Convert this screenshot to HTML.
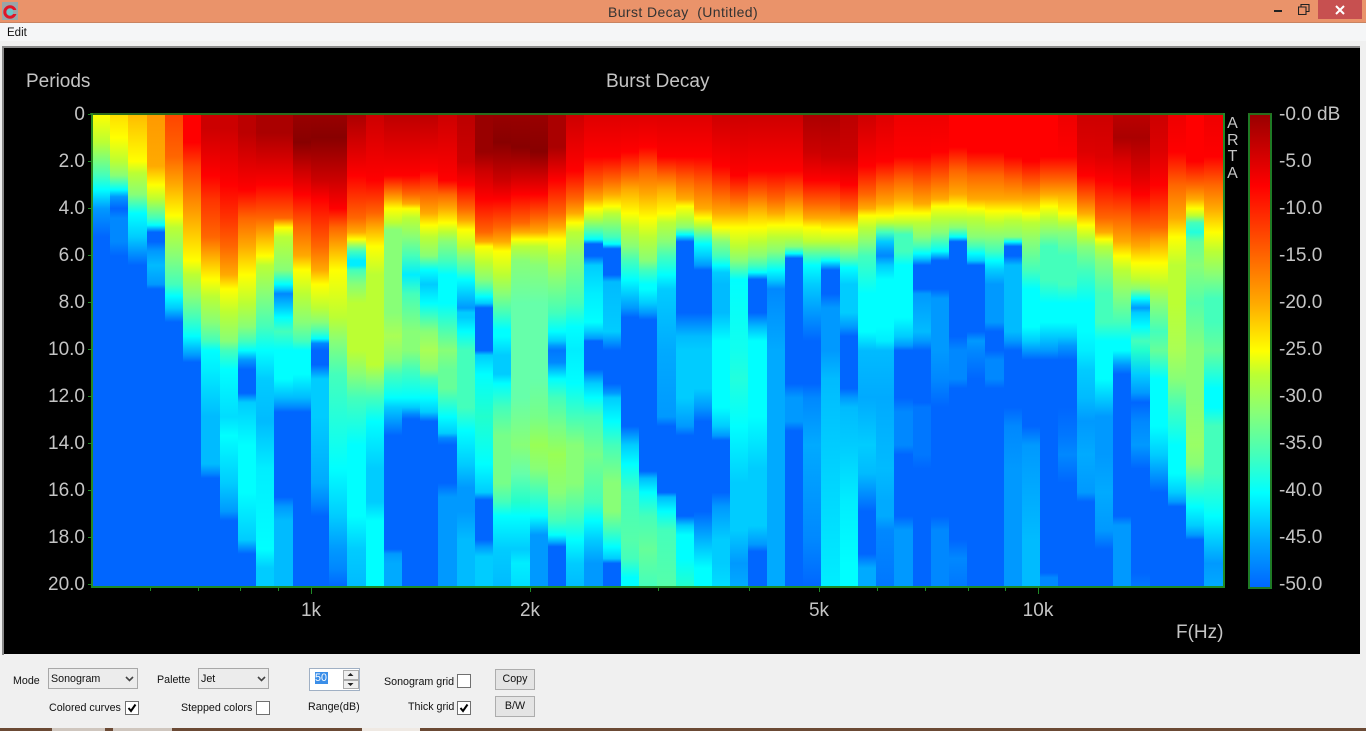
<!DOCTYPE html>
<html><head><meta charset="utf-8"><title>Burst Decay</title>
<style>
html,body{margin:0;padding:0;width:1366px;height:731px;overflow:hidden;background:#f0f0f0;font-family:"Liberation Sans",sans-serif}
div,span,b{position:absolute;white-space:pre}
#map{left:92px;top:114px;width:1131px;height:473px;display:flex}
#map i{display:block;flex:1 1 0;height:100%}
.l{color:#c4c4c4;font-size:19px;line-height:20px}
.yl{right:1281px;text-align:right}
.dl{left:1279px}
.xl{transform:translateX(-50%)}
.t{background:#1f8a25}
.c{font-size:10.7px;line-height:14px;color:#111}
.cb{width:12px;height:12px;border:1px solid #707070;background:#fff}
.sel{border:1px solid #a8a8a8;background:#ececec;height:19px}
.btn{border:1px solid #adadad;background:#e4e4e4;width:38px;height:19px;text-align:center;font-size:10.7px;line-height:19px;color:#111}
</style></head><body>
<div style="left:0;top:0;width:1366px;height:22px;background:#ea936a"></div>
<div style="left:0;top:22px;width:1366px;height:1px;background:#c98461"></div>
<svg style="position:absolute;left:2px;top:2px" width="16" height="18" viewBox="0 0 16 18"><rect x="0" y="0" width="16" height="18" fill="#9aa6a8"/><circle cx="8" cy="10" r="5.2" fill="#6cc6cc" stroke="#e01528" stroke-width="3"/><rect x="11" y="8" width="5" height="4" fill="#9aa6a8"/></svg>
<div style="left:608px;top:4px;font-size:14px;line-height:16px;color:#333;letter-spacing:.4px">Burst Decay  (Untitled)</div>
<div style="left:1274px;top:10px;width:8px;height:2px;background:#222"></div>
<svg style="position:absolute;left:1298px;top:4px" width="12" height="11" viewBox="0 0 12 11"><path d="M3 2.5V.5H11V7.5H8.5M.5 3H8V10.5H.5Z" fill="none" stroke="#222" stroke-width="1.1"/></svg>
<div style="left:1318px;top:0;width:44px;height:19px;background:#c75050"></div>
<svg style="position:absolute;left:1335px;top:5px" width="10" height="10" viewBox="0 0 10 10"><path d="M1 1L9 9M9 1L1 9" stroke="#fff" stroke-width="2"/></svg>

<div style="left:0;top:23px;width:1366px;height:18px;background:#f5f6f7"></div>
<div class="c" style="left:7px;top:26px;color:#111;font-size:11.5px">Edit</div>

<div style="left:3px;top:46px;width:1357px;height:608px;background:#000"></div>
<div style="left:3px;top:46px;width:1357px;height:2px;background:#8a8a8a"></div>
<div style="left:2px;top:46px;width:2px;height:609px;background:#8a8a8a"></div>

<div class="l" style="left:26px;top:72px">Periods</div>
<div class="l" style="left:606px;top:72px">Burst Decay</div>

<div class="l yl" style="top:105px">0</div>
<div class="l yl" style="top:152px">2.0</div>
<div class="l yl" style="top:199px">4.0</div>
<div class="l yl" style="top:246px">6.0</div>
<div class="l yl" style="top:293px">8.0</div>
<div class="l yl" style="top:340px">10.0</div>
<div class="l yl" style="top:387px">12.0</div>
<div class="l yl" style="top:434px">14.0</div>
<div class="l yl" style="top:481px">16.0</div>
<div class="l yl" style="top:528px">18.0</div>
<div class="l yl" style="top:575px">20.0</div>

<div class="t" style="left:88px;top:114px;width:4px;height:1px"></div>
<div class="t" style="left:88px;top:161px;width:4px;height:1px"></div>
<div class="t" style="left:88px;top:208px;width:4px;height:1px"></div>
<div class="t" style="left:88px;top:255px;width:4px;height:1px"></div>
<div class="t" style="left:88px;top:302px;width:4px;height:1px"></div>
<div class="t" style="left:88px;top:349px;width:4px;height:1px"></div>
<div class="t" style="left:88px;top:396px;width:4px;height:1px"></div>
<div class="t" style="left:88px;top:443px;width:4px;height:1px"></div>
<div class="t" style="left:88px;top:490px;width:4px;height:1px"></div>
<div class="t" style="left:88px;top:537px;width:4px;height:1px"></div>
<div class="t" style="left:88px;top:584px;width:4px;height:1px"></div>

<div id="map">
<i style="background:linear-gradient(#ff0 0,#bf3 6%,#4fb 13%,#0ff 16%,#09f 20%,#06f 26%)"></i>
<i style="background:linear-gradient(#fd0 0,#ff0 5%,#bf3 10%,#8f7 13%,#0ff 16%,#09f 17.5%,#06f 20%,#08f 22%,#08f 27%,#06f 30%)"></i>
<i style="background:linear-gradient(#fb0 0,#ff0 10%,#bf3 12.5%,#8f7 17%,#0ff 21%,#0cf 26%,#09f 29%,#06f 32%)"></i>
<i style="background:linear-gradient(#f90 0,#fa0 11%,#ff0 15%,#bf3 18%,#4fb 22%,#0ff 23.5%,#06f 25%,#06f 27%,#09f 29%,#0bf 32%,#09f 36%,#06f 37%)"></i>
<i style="background:linear-gradient(#f40 0,#f60 9%,#fa0 15%,#ff0 21.5%,#bf3 24%,#8f7 30%,#4fb 36%,#0ff 38.5%,#0cf 41%,#09f 42.5%,#06f 44%)"></i>
<i style="background:linear-gradient(#f00 0,#f00 6%,#f40 11%,#fa0 22%,#ff0 31%,#bf3 34%,#8f7 38.5%,#4fb 43%,#0ff 47%,#0cf 49%,#09f 51%,#06f 52.5%)"></i>
<i style="background:linear-gradient(#c00 3%,#f00 13%,#f30 18%,#f60 26%,#fa0 30%,#ff0 35%,#bf3 38.6%,#8f7 44%,#4fb 48%,#0ff 50%,#0ef 54%,#0bf 64%,#0bf 74%,#08f 76%,#06f 77%)"></i>
<i style="background:linear-gradient(#c00 3%,#f00 15%,#f30 22%,#f60 28%,#fa0 34%,#ff0 37%,#bf3 42%,#8f7 48%,#4fb 50%,#0ff 54%,#0df 64%,#0ff 68%,#0cf 78%,#09f 84%,#06f 86%)"></i>
<i style="background:linear-gradient(#b00 4%,#f00 16%,#f60 22%,#fa0 28%,#ff0 34%,#bf3 40%,#8f7 45%,#4fb 48%,#0ff 50%,#09f 52%,#06f 54%,#06f 59%,#0cf 61%,#0ff 70%,#0ff 80%,#0cf 90%,#08f 92%,#06f 93%)"></i>
<i style="background:linear-gradient(#a00 4%,#f00 15%,#f60 22%,#ff0 30%,#bf3 32%,#8f7 38%,#4fb 45%,#0ff 50%,#0cf 56%,#0bf 65%,#0ef 75%,#0ff 92%,#0cf 96%,#0cf 100%)"></i>
<i style="background:linear-gradient(#a00 4%,#f00 15%,#f60 22%,#ff0 24%,#bf3 26%,#8f7 33%,#0ff 36%,#0cf 37%,#08f 38%,#0cf 41%,#0ff 43%,#4fb 46%,#0ff 50%,#0ff 56%,#0bf 60%,#08f 62%,#06f 63%,#06f 81%,#09f 83%,#0bf 86%,#0bf 100%)"></i>
<i style="background:linear-gradient(#900 0,#800 6%,#c00 12%,#f00 17%,#f60 24%,#fa0 30%,#ff0 33%,#bf3 38%,#8f7 44%,#4fb 48%,#0ff 50%,#0ff 55%,#0bf 60%,#08f 62%,#06f 63%)"></i>
<i style="background:linear-gradient(#900 0,#800 5%,#c00 14%,#f00 18%,#f60 28%,#fa0 33%,#ff0 36%,#bf3 41%,#8f7 44%,#4fb 46%,#0ff 47.5%,#08f 48.5%,#06f 50%,#06f 53%,#0cf 56%,#0cf 64%,#0af 78%,#08f 82%,#06f 85%)"></i>
<i style="background:linear-gradient(#900 0,#800 5%,#c00 14%,#f00 20%,#f60 24%,#fa0 28%,#ff0 33%,#bf3 43%,#8f7 48%,#4fb 55%,#0ff 75%,#0cf 85%,#09f 92%,#08f 96%,#06f 100%)"></i>
<i style="background:linear-gradient(#a00 0,#f00 13%,#f60 22%,#fa0 25%,#ff0 26.5%,#8f7 28%,#4fb 29%,#0ef 31%,#0ef 32%,#4fb 33%,#8f7 36%,#bf3 40%,#bf3 50%,#8f7 55%,#4fb 60%,#0ff 70%,#0ff 85%,#0cf 92%,#0bf 100%)"></i>
<i style="background:linear-gradient(#c00 0,#f00 14%,#f60 21%,#fa0 24%,#ff0 28%,#bf3 34%,#bf3 53%,#8f7 56%,#4fb 60%,#0ff 65%,#0cf 75%,#0cf 82%,#0ff 86%,#0ff 100%)"></i>
<i style="background:linear-gradient(#b00 0,#f00 13%,#f60 16%,#fa0 18%,#ff0 20%,#bf3 23%,#8f7 24.5%,#8f7 42%,#af5 47%,#8f7 52%,#4fb 55%,#0ff 60%,#0cf 62%,#09f 65%,#06f 68%,#06f 92%,#09f 93%,#0af 95%,#0af 100%)"></i>
<i style="background:linear-gradient(#b00 0,#f00 13%,#f60 17%,#fa0 19%,#ff0 20%,#bf3 22%,#8f7 26%,#4fb 30%,#0ef 34%,#4fb 38%,#8f7 46%,#8f7 50%,#4fb 54%,#0ff 60%,#0cf 62%,#08f 63.5%,#06f 64.5%)"></i>
<i style="background:linear-gradient(#b00 0,#f00 12%,#f60 17%,#fa0 21%,#ff0 23.5%,#bf3 26%,#8f7 30%,#0ff 33%,#0cf 36%,#0ff 40%,#8f7 46%,#af5 50%,#8f7 54%,#4fb 56%,#0ff 60%,#0cf 63%,#06f 65%)"></i>
<i style="background:linear-gradient(#c00 0,#f00 14%,#f60 17%,#fa0 20%,#ff0 23%,#bf3 25%,#8f7 27%,#4fb 31%,#0ff 34%,#0ff 40%,#4fb 45%,#8f7 50%,#6f9 54%,#6f9 58%,#0ff 64%,#0cf 67.5%,#08f 68.5%,#06f 70%,#06f 78%,#09f 81%,#09f 100%)"></i>
<i style="background:linear-gradient(#b00 0,#c00 10%,#f00 15%,#f60 20%,#fa0 22.5%,#ff0 24.5%,#bf3 28%,#8f7 30%,#4fb 33%,#0ff 35%,#0cf 38%,#09f 41%,#0cf 42%,#0cf 43%,#0ff 46%,#4fb 50%,#4fb 62%,#0ff 67%,#0cf 74%,#09f 79%,#09f 84%,#0bf 90%,#0bf 100%)"></i>
<i style="background:linear-gradient(#900 0,#900 8%,#c00 12%,#f00 18%,#f60 25%,#fa0 27%,#ff0 28%,#bf3 31.5%,#8f7 35%,#4fb 37%,#0ff 38.6%,#0cf 40%,#06f 41%,#06f 50%,#0cf 51%,#0ff 55%,#2fc 64%,#0ff 74%,#0cf 80%,#06f 81.6%,#06f 90%,#09f 91.5%,#0cf 93.6%,#0cf 100%)"></i>
<i style="background:linear-gradient(#900 0,#800 6%,#a00 10%,#c00 14%,#f00 18%,#f60 24%,#fa0 27%,#ff0 29%,#bf3 34%,#8f7 38%,#4fb 42%,#0ff 45.6%,#0ff 47%,#0cf 51%,#0cf 55%,#0ff 57%,#4fb 62%,#7f8 68%,#7f8 78%,#4fb 82%,#0ff 85%,#0cf 92%,#0bf 100%)"></i>
<i style="background:linear-gradient(#900 0,#800 7%,#c00 13%,#f00 17%,#f60 23%,#fa0 25%,#ff0 26.5%,#bf3 28%,#8f7 31%,#6fa 40%,#6fa 60%,#8f7 70%,#6fa 76%,#2fc 82%,#0ff 85%,#0cf 92%,#0ef 95%,#0df 100%)"></i>
<i style="background:linear-gradient(#900 0,#800 8%,#c00 13%,#f00 17%,#f60 22%,#fa0 25%,#ff0 26.5%,#bf3 28%,#8f7 32%,#6fa 40%,#6fa 56%,#7f8 64%,#9f5 70%,#8f7 75%,#4fb 80%,#0ff 85%,#0cf 87%,#09f 89%,#09f 100%)"></i>
<i style="background:linear-gradient(#a00 0,#a00 7%,#f00 14%,#f60 21%,#fa0 24%,#ff0 26.5%,#bf3 30%,#8f7 35%,#4fb 42%,#0ff 46%,#0cf 48%,#09f 49%,#07f 50%,#08f 52.5%,#0ff 56%,#4fb 60%,#7f8 66%,#9f5 72%,#8f7 80%,#4fb 86%,#0ff 89%,#0af 90.5%,#06f 91.5%)"></i>
<i style="background:linear-gradient(#c00 0,#f00 12%,#f60 18%,#fa0 21%,#ff0 23%,#bf3 25%,#8f7 30%,#4fb 40%,#0ff 45%,#0ef 50%,#0ff 57%,#4fb 64%,#8f7 70%,#8f7 78%,#4fb 85%,#0ff 90%,#0cf 95%,#0bf 100%)"></i>
<i style="background:linear-gradient(#d00 0,#f00 9%,#f60 15%,#fa0 18%,#ff0 20%,#bf3 22%,#4fb 25%,#0ff 26.5%,#06f 27.5%,#06f 30%,#0cf 32%,#0ef 38%,#0ff 44%,#0cf 46%,#09f 47.5%,#06f 48%,#06f 54%,#0cf 57%,#0ff 60%,#4fb 64%,#7f8 72%,#4fb 82%,#0ff 86%,#0cf 90%,#09f 95%,#09f 100%)"></i>
<i style="background:linear-gradient(#d00 0,#f00 9%,#f60 14%,#fa0 17%,#ff0 19.5%,#bf3 21%,#4fb 26%,#0ff 27.5%,#06f 28.5%,#06f 34%,#0bf 35.5%,#0cf 46%,#09f 48%,#06f 50%,#06f 57%,#09f 59%,#0cf 60%,#0ff 65%,#4fb 70%,#8f7 78%,#8f7 84%,#4fb 88%,#0ff 91.5%,#0cf 94%,#06f 95%)"></i>
<i style="background:linear-gradient(#d00 0,#f00 8%,#f60 13%,#fa0 16%,#ff0 21%,#bf3 24%,#8f7 28%,#4fb 31%,#0ff 35%,#0cf 38%,#09f 41%,#06f 43%,#06f 66%,#09f 68%,#0cf 70%,#0ff 74%,#4fb 80%,#5fa 90%,#4fb 94%,#0ff 98%,#0ff 100%)"></i>
<i style="background:linear-gradient(#d00 0,#f00 7%,#f60 12%,#fa0 17%,#ff0 22%,#bf3 26%,#8f7 31%,#4fb 33%,#0ff 36%,#0ff 37%,#0cf 40%,#09f 42%,#06f 43.5%,#06f 75.5%,#0bf 77%,#0ff 80%,#4fb 85%,#6f9 92%,#4fb 100%)"></i>
<i style="background:linear-gradient(#d00 0,#f00 9%,#f60 13%,#fa0 16%,#ff0 21%,#bf3 23%,#8f7 27%,#4fb 30%,#0ff 34%,#0ef 35%,#0cf 37%,#0af 50%,#09f 64%,#06f 66%,#06f 80%,#0bf 81%,#0ff 84%,#4fb 88%,#5fa 100%)"></i>
<i style="background:linear-gradient(#d00 0,#f00 9%,#f60 14%,#fa0 18%,#ff0 19.5%,#bf3 22%,#8f7 24%,#0ff 25.5%,#06f 27%,#06f 42%,#09f 45%,#0bf 47%,#0cf 50%,#0cf 60%,#09f 66%,#06f 68%,#06f 85%,#09f 86%,#0cf 87%,#0ff 89%,#0ff 94%,#2fc 100%)"></i>
<i style="background:linear-gradient(#d00 0,#f00 9%,#f60 15%,#fa0 20%,#ff0 22%,#bf3 23.5%,#4fb 26%,#0ff 27.5%,#0cf 30%,#09f 32%,#06f 33%,#06f 42%,#09f 45%,#0bf 47%,#0cf 50%,#0cf 58%,#09f 62%,#06f 65%,#06f 84%,#09f 88%,#0cf 92%,#0ff 96%,#0ff 100%)"></i>
<i style="background:linear-gradient(#c00 0,#f00 11%,#f60 17%,#fa0 21%,#ff0 24%,#8f7 27%,#4fb 30%,#0ff 32%,#0cf 33.5%,#0bf 36%,#0bf 42%,#0ff 48%,#0ff 62%,#0cf 66%,#09f 68%,#06f 69%,#06f 80%,#09f 83%,#0cf 90%,#0cf 95%,#0df 100%)"></i>
<i style="background:linear-gradient(#c00 0,#f00 13%,#f60 18%,#fa0 21%,#ff0 24%,#bf3 28%,#8f7 31%,#0ff 35%,#1fe 50%,#2fd 56%,#0ff 66%,#0cf 78%,#0cf 88%,#09f 95%,#0af 100%)"></i>
<i style="background:linear-gradient(#c00 0,#f00 12%,#f60 17%,#fa0 20%,#ff0 24%,#bf3 27%,#8f7 30%,#4fb 32%,#0ff 33.5%,#06f 35%,#06f 42%,#0bf 45%,#0ff 48%,#0ff 64%,#0cf 75%,#0cf 87%,#09f 91%,#06f 92.5%)"></i>
<i style="background:linear-gradient(#c00 0,#f00 12%,#f60 18%,#fa0 21%,#ff0 23.5%,#bf3 26%,#8f7 29%,#0ff 33%,#0cf 35%,#08f 37%,#0af 50%,#0af 100%)"></i>
<i style="background:linear-gradient(#c00 0,#f00 12%,#f60 17%,#fa0 20%,#ff0 23.5%,#bf3 26%,#8f7 28%,#0ff 29.5%,#06f 30.5%,#06f 57%,#09f 60%,#09f 65%,#06f 67%)"></i>
<i style="background:linear-gradient(#a00 0,#c00 8%,#f00 14%,#f60 19%,#fa0 22%,#ff0 24%,#bf3 27%,#4fb 30%,#0ff 32%,#0cf 36%,#09f 42%,#06f 48%,#06f 57%,#08f 60%,#0af 70%,#08f 90%,#06f 100%)"></i>
<i style="background:linear-gradient(#a00 0,#c00 9%,#f00 14%,#f60 19%,#fa0 22%,#ff0 24.5%,#bf3 27%,#4fb 30%,#0ff 31%,#06f 33%,#06f 38%,#09f 41%,#09f 50%,#0bf 56%,#0cf 70%,#0df 85%,#0ef 100%)"></i>
<i style="background:linear-gradient(#b00 0,#c00 9%,#f00 15%,#f60 20%,#fa0 22%,#ff0 24.5%,#bf3 27%,#8f7 29%,#4fb 31%,#0ff 32.5%,#0cf 36%,#0cf 42%,#09f 45%,#06f 47%,#06f 58%,#09f 60%,#0bf 62%,#0cf 70%,#0ef 82%,#0ff 95%,#0ff 100%)"></i>
<i style="background:linear-gradient(#c00 0,#f00 11%,#f60 17%,#fa0 20%,#ff0 21.5%,#bf3 24%,#8f7 27%,#4fb 30%,#0ff 38%,#0ff 46%,#0bf 50%,#0af 60%,#0cf 70%,#0bf 76%,#06f 84%,#06f 93%,#0af 96%,#0af 100%)"></i>
<i style="background:linear-gradient(#d00 0,#f00 10%,#f60 15%,#fa0 19%,#ff0 21.5%,#bf3 23%,#4fb 25%,#0cf 27%,#09f 29%,#08f 30%,#0cf 32%,#0ff 35%,#0ff 45%,#0ef 48%,#0bf 50%,#0af 60%,#0bf 75%,#0af 82%,#0af 85%,#08f 88%,#07f 100%)"></i>
<i style="background:linear-gradient(#e00 0,#f00 9%,#f60 14%,#fa0 18%,#ff0 21%,#bf3 23%,#4fb 25.5%,#4fb 29%,#0ff 32%,#0ff 43%,#0cf 47%,#09f 49%,#06f 50%,#06f 60%,#08f 63%,#08f 70%,#06f 72%,#06f 85%,#09f 88%,#09f 100%)"></i>
<i style="background:linear-gradient(#e00 0,#f00 9%,#f60 15%,#fa0 19%,#ff0 21%,#bf3 23%,#8f7 26%,#4fb 28%,#0ff 29.5%,#0cf 30.5%,#06f 32%,#06f 37%,#09f 38%,#0af 42%,#0bf 46%,#09f 48%,#06f 50%,#06f 61%,#07f 62%,#07f 72%,#06f 75%)"></i>
<i style="background:linear-gradient(#e00 0,#f00 8%,#f60 14%,#fa0 18%,#ff0 19.5%,#bf3 22%,#8f7 25%,#4fb 27%,#0ff 29%,#06f 31%,#06f 37%,#09f 39%,#09f 50%,#08f 56%,#06f 62%,#06f 85%,#08f 88%,#08f 100%)"></i>
<i style="background:linear-gradient(#f00 0,#f00 7%,#f60 12%,#fa0 17%,#ff0 19.5%,#bf3 22%,#8f7 24%,#0ff 26%,#06f 27%,#06f 47%,#08f 50%,#08f 56%,#06f 58%,#06f 90%,#08f 94%,#07f 100%)"></i>
<i style="background:linear-gradient(#f00 0,#f00 8%,#f60 13%,#fa0 18%,#ff0 20%,#bf3 22%,#8f7 26%,#4fb 28%,#0ff 29.5%,#0cf 31%,#06f 32%,#06f 46%,#09f 48%,#08f 50%,#06f 56%)"></i>
<i style="background:linear-gradient(#f00 0,#f00 8%,#f60 13%,#fa0 18%,#ff0 20.5%,#bf3 23%,#8f7 26%,#4fb 29%,#0ff 31%,#0cf 33%,#09f 36%,#09f 44%,#06f 46%,#06f 50%,#08f 52%,#08f 56%,#06f 58%)"></i>
<i style="background:linear-gradient(#f00 0,#f00 9%,#f60 14%,#fa0 18%,#ff0 20.5%,#bf3 22.5%,#8f7 26%,#0ff 27%,#06f 28%,#06f 30%,#0bf 32%,#0bf 46%,#09f 48%,#06f 50%,#06f 62%,#08f 66%,#09f 75%,#09f 100%)"></i>
<i style="background:linear-gradient(#f00 0,#f00 10%,#f60 15%,#fa0 18%,#ff0 21%,#bf3 23%,#8f7 27%,#4fb 33%,#0ff 37%,#0ff 45%,#0cf 48%,#09f 50%,#06f 52%,#06f 66%,#09f 70%,#0af 80%,#0bf 90%,#0bf 100%)"></i>
<i style="background:linear-gradient(#f00 0,#f00 9%,#f60 14%,#fa0 17%,#ff0 19.5%,#bf3 22%,#8f7 25%,#4fb 28%,#4fb 35%,#0ff 40%,#0ff 44%,#0cf 47%,#09f 50%,#06f 52%,#06f 97%,#08f 98%,#08f 100%)"></i>
<i style="background:linear-gradient(#e00 0,#f00 9%,#f60 14%,#fa0 17%,#ff0 21%,#bf3 23%,#8f7 25%,#4fb 30%,#4fb 36%,#0ff 40%,#0ff 44%,#0cf 47%,#09f 49%,#06f 52%,#06f 62%,#07f 68%,#08f 72%,#06f 78%)"></i>
<i style="background:linear-gradient(#c00 0,#d00 8%,#f00 13%,#f60 18%,#fa0 21%,#ff0 23.5%,#bf3 26%,#8f7 28%,#4fb 33%,#0ff 40%,#0ff 46%,#0ef 50%,#0cf 54%,#0bf 60%,#09f 65%,#0af 72%,#09f 80%,#06f 82%)"></i>
<i style="background:linear-gradient(#c00 0,#d00 9%,#f00 14%,#f60 22%,#fa0 25%,#ff0 26.5%,#bf3 28%,#8f7 31%,#4fb 38%,#4fb 44%,#0ff 48%,#0ff 56%,#0cf 60%,#09f 64%,#09f 72%,#0af 80%,#09f 88%,#06f 92%)"></i>
<i style="background:linear-gradient(#b00 0,#a00 5%,#d00 10%,#f00 15%,#f60 22%,#fa0 27%,#ff0 30%,#bf3 33%,#8f7 38%,#4fb 44%,#0ff 48%,#0ff 50%,#09f 53%,#06f 55%,#06f 85%,#09f 87%,#09f 100%)"></i>
<i style="background:linear-gradient(#b00 0,#a00 5%,#d00 13%,#f00 17%,#f60 24%,#fa0 28%,#ff0 31.5%,#bf3 35%,#8f7 37%,#0ff 39%,#09f 41%,#0cf 42%,#0ff 45%,#4fb 48%,#2fc 50%,#0cf 55%,#09f 59%,#06f 61%,#08f 65%,#09f 70%,#06f 75%,#06f 97%,#07f 100%)"></i>
<i style="background:linear-gradient(#c00 0,#d00 8%,#f00 15%,#f60 24%,#fa0 27%,#ff0 31.5%,#bf3 36%,#8f7 40%,#4fb 46%,#6f9 50%,#4fb 52%,#0ff 56%,#0ff 66%,#0cf 72%,#09f 76%,#06f 80%)"></i>
<i style="background:linear-gradient(#e00 0,#f00 8%,#f60 15%,#fa0 22%,#ff0 26%,#bf3 32%,#bf3 40%,#af5 50%,#8f7 56%,#4fb 62%,#0ff 70%,#0ff 76%,#0cf 80%,#09f 82%,#06f 83%)"></i>
<i style="background:linear-gradient(#f00 0,#f00 10%,#f60 15%,#fa0 18%,#ff0 20%,#bf3 21.5%,#4fb 23%,#2fd 25%,#6f9 27%,#8f7 32%,#5fa 40%,#8f7 50%,#8f7 60%,#9f6 70%,#8f7 74%,#4fb 78%,#0ff 83%,#0cf 87%,#09f 89%,#06f 90%)"></i>
<i style="background:linear-gradient(#e00 0,#f00 9%,#f60 15%,#fa0 20%,#ff0 25%,#bf3 29%,#8f7 34%,#4fb 39%,#4fb 44%,#6f9 50%,#0ff 58%,#0ff 62%,#4fb 66%,#4fb 76%,#0ff 85%,#0cf 90%,#09f 95%,#0af 100%)"></i>
</div>

<div style="left:90px;top:113px;width:1135px;height:2px;background:#2b6b1b"></div>
<div style="left:91px;top:113px;width:2px;height:475px;background:#2a8a22"></div>
<div style="left:1223px;top:113px;width:2px;height:475px;background:#1f8a25"></div>
<div style="left:91px;top:586px;width:1134px;height:2px;background:#1f8a25"></div>

<div class="t" style="left:150px;top:588px;width:1px;height:3px"></div>
<div class="t" style="left:198px;top:588px;width:1px;height:3px"></div>
<div class="t" style="left:240px;top:588px;width:1px;height:3px"></div>
<div class="t" style="left:278px;top:588px;width:1px;height:3px"></div>
<div class="t" style="left:311px;top:588px;width:1px;height:6px"></div>
<div class="t" style="left:530px;top:588px;width:1px;height:4px"></div>
<div class="t" style="left:658px;top:588px;width:1px;height:3px"></div>
<div class="t" style="left:749px;top:588px;width:1px;height:3px"></div>
<div class="t" style="left:819px;top:588px;width:1px;height:4px"></div>
<div class="t" style="left:877px;top:588px;width:1px;height:3px"></div>
<div class="t" style="left:925px;top:588px;width:1px;height:3px"></div>
<div class="t" style="left:968px;top:588px;width:1px;height:3px"></div>
<div class="t" style="left:1005px;top:588px;width:1px;height:3px"></div>
<div class="t" style="left:1038px;top:588px;width:1px;height:6px"></div>

<div class="l xl" style="left:311px;top:601px">1k</div>
<div class="l xl" style="left:530px;top:601px">2k</div>
<div class="l xl" style="left:819px;top:601px">5k</div>
<div class="l xl" style="left:1038px;top:601px">10k</div>
<div class="l" style="left:1176px;top:623px">F(Hz)</div>

<div class="l" style="left:1227px;top:116px;font-size:16px;line-height:16.7px;text-align:center;width:11px">A<br>R<br>T<br>A</div>

<div style="left:1248px;top:113px;width:20px;height:472px;border:2px solid #1f7a25;border-top-color:#2b6b1b;background:linear-gradient(#900 0,#f00 15%,#f60 30%,#fa0 40%,#ff0 50%,#bf3 55%,#8f7 63%,#4fb 72%,#0ff 80%,#0af 90%,#06f 100%)"></div>

<div class="l" style="left:1279px;top:105px">-0.0 dB</div>
<div class="l dl" style="top:152px">-5.0</div>
<div class="l dl" style="top:199px">-10.0</div>
<div class="l dl" style="top:246px">-15.0</div>
<div class="l dl" style="top:293px">-20.0</div>
<div class="l dl" style="top:340px">-25.0</div>
<div class="l dl" style="top:387px">-30.0</div>
<div class="l dl" style="top:434px">-35.0</div>
<div class="l dl" style="top:481px">-40.0</div>
<div class="l dl" style="top:528px">-45.0</div>
<div class="l dl" style="top:575px">-50.0</div>

<div class="c" style="left:13px;top:674px">Mode</div>
<div class="sel" style="left:48px;top:668px;width:88px"></div>
<div class="c" style="left:51px;top:672px">Sonogram</div>
<svg style="position:absolute;left:125px;top:676px" width="9" height="6" viewBox="0 0 9 6"><path d="M1 1L4.5 4.5L8 1" fill="none" stroke="#444" stroke-width="1.6"/></svg>
<div class="c" style="left:157px;top:673px">Palette</div>
<div class="sel" style="left:198px;top:668px;width:69px"></div>
<div class="c" style="left:201px;top:672px">Jet</div>
<svg style="position:absolute;left:257px;top:676px" width="9" height="6" viewBox="0 0 9 6"><path d="M1 1L4.5 4.5L8 1" fill="none" stroke="#444" stroke-width="1.6"/></svg>

<div class="c" style="left:49px;top:701px">Colored curves</div>
<div class="cb" style="left:125px;top:701px"></div>
<svg style="position:absolute;left:125px;top:701px" width="14" height="14" viewBox="0 0 14 14"><path d="M3.5 7L6 10L10.5 3.5" fill="none" stroke="#000" stroke-width="2"/></svg>
<div class="c" style="left:181px;top:701px">Stepped colors</div>
<div class="cb" style="left:256px;top:701px"></div>

<div style="left:309px;top:668px;width:49px;height:21px;border:1px solid #a0b0c4;background:#fff"></div>
<div style="left:315px;top:672px;width:13px;height:12px;background:#3b8ee8"></div>
<div class="c" style="left:315px;top:671px;color:#fff">50</div>
<div style="left:343px;top:670px;width:14px;height:8px;border:1px solid #aaa;background:#eee"></div>
<div style="left:343px;top:680px;width:14px;height:7px;border:1px solid #aaa;background:#eee"></div>
<svg style="position:absolute;left:346px;top:672px" width="9" height="15" viewBox="0 0 9 15"><path d="M1.5 4L4.5 1L7.5 4ZM1.5 11L4.5 14L7.5 11Z" fill="#222"/></svg>
<div class="c" style="left:308px;top:700px">Range(dB)</div>

<div class="c" style="left:384px;top:675px">Sonogram grid</div>
<div class="cb" style="left:457px;top:674px"></div>
<div class="c" style="left:408px;top:700px">Thick grid</div>
<div class="cb" style="left:457px;top:701px"></div>
<svg style="position:absolute;left:457px;top:701px" width="14" height="14" viewBox="0 0 14 14"><path d="M3.5 7L6 10L10.5 3.5" fill="none" stroke="#000" stroke-width="2"/></svg>

<div class="btn" style="left:495px;top:669px">Copy</div>
<div class="btn" style="left:495px;top:696px">B/W</div>

<div style="left:0;top:728px;width:1366px;height:3px;background:#6b4a35"></div>
<div style="left:52px;top:728px;width:53px;height:3px;background:#cfc6be"></div>
<div style="left:113px;top:728px;width:59px;height:3px;background:#cfc6be"></div>
<div style="left:362px;top:728px;width:58px;height:3px;background:#efe9e3"></div>
</body></html>
